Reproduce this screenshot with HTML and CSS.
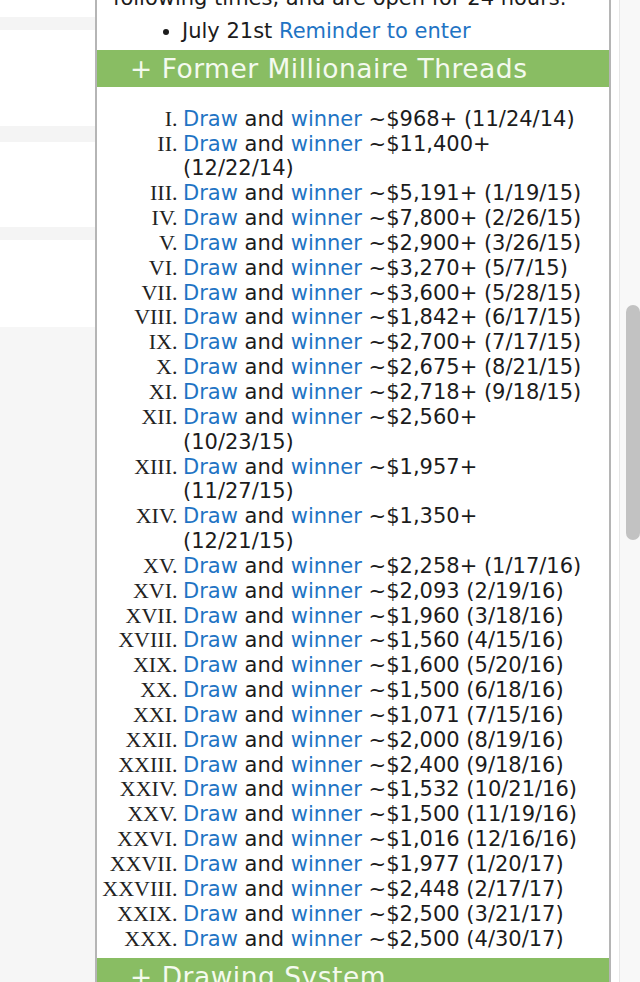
FILE: index.html
```html
<!DOCTYPE html>
<html>
	<head>
		<meta charset="utf-8" />
		<title>Former Millionaire Threads</title>
		<link rel="stylesheet" href="styles.css">
	</head>
	<body>
		<div id="page">
			<div id="side">
				<div class="band band1"></div>
				<div class="band band2"></div>
				<div class="band band3"></div>
				<div class="band band4"></div>
			</div>
			<div id="panel">
				<p class="intro">following times, and are open for 24 hours.</p>
				<ul class="dates">
					<li>July 21st <a href="#">Reminder to enter</a></li>
				</ul>
				<div class="head">+ Former Millionaire Threads</div>
				<ol class="threads">
					<li><a href="#">Draw</a> and <a href="#">winner</a> ~$968+ (11/24/14)</li>
					<li><a href="#">Draw</a> and <a href="#">winner</a> ~$11,400+ (12/22/14)</li>
					<li><a href="#">Draw</a> and <a href="#">winner</a> ~$5,191+ (1/19/15)</li>
					<li><a href="#">Draw</a> and <a href="#">winner</a> ~$7,800+ (2/26/15)</li>
					<li><a href="#">Draw</a> and <a href="#">winner</a> ~$2,900+ (3/26/15)</li>
					<li><a href="#">Draw</a> and <a href="#">winner</a> ~$3,270+ (5/7/15)</li>
					<li><a href="#">Draw</a> and <a href="#">winner</a> ~$3,600+ (5/28/15)</li>
					<li><a href="#">Draw</a> and <a href="#">winner</a> ~$1,842+ (6/17/15)</li>
					<li><a href="#">Draw</a> and <a href="#">winner</a> ~$2,700+ (7/17/15)</li>
					<li><a href="#">Draw</a> and <a href="#">winner</a> ~$2,675+ (8/21/15)</li>
					<li><a href="#">Draw</a> and <a href="#">winner</a> ~$2,718+ (9/18/15)</li>
					<li><a href="#">Draw</a> and <a href="#">winner</a> ~$2,560+ (10/23/15)</li>
					<li><a href="#">Draw</a> and <a href="#">winner</a> ~$1,957+ (11/27/15)</li>
					<li><a href="#">Draw</a> and <a href="#">winner</a> ~$1,350+ (12/21/15)</li>
					<li><a href="#">Draw</a> and <a href="#">winner</a> ~$2,258+ (1/17/16)</li>
					<li><a href="#">Draw</a> and <a href="#">winner</a> ~$2,093 (2/19/16)</li>
					<li><a href="#">Draw</a> and <a href="#">winner</a> ~$1,960 (3/18/16)</li>
					<li><a href="#">Draw</a> and <a href="#">winner</a> ~$1,560 (4/15/16)</li>
					<li><a href="#">Draw</a> and <a href="#">winner</a> ~$1,600 (5/20/16)</li>
					<li><a href="#">Draw</a> and <a href="#">winner</a> ~$1,500 (6/18/16)</li>
					<li><a href="#">Draw</a> and <a href="#">winner</a> ~$1,071 (7/15/16)</li>
					<li><a href="#">Draw</a> and <a href="#">winner</a> ~$2,000 (8/19/16)</li>
					<li><a href="#">Draw</a> and <a href="#">winner</a> ~$2,400 (9/18/16)</li>
					<li><a href="#">Draw</a> and <a href="#">winner</a> ~$1,532 (10/21/16)</li>
					<li><a href="#">Draw</a> and <a href="#">winner</a> ~$1,500 (11/19/16)</li>
					<li><a href="#">Draw</a> and <a href="#">winner</a> ~$1,016 (12/16/16)</li>
					<li><a href="#">Draw</a> and <a href="#">winner</a> ~$1,977 (1/20/17)</li>
					<li><a href="#">Draw</a> and <a href="#">winner</a> ~$2,448 (2/17/17)</li>
					<li><a href="#">Draw</a> and <a href="#">winner</a> ~$2,500 (3/21/17)</li>
					<li><a href="#">Draw</a> and <a href="#">winner</a> ~$2,500 (4/30/17)</li>
				</ol>
				<div class="head">+ Drawing System</div>
			</div>
			<div id="gutter">
				<div class="track">
					<div class="thumb"></div>
				</div>
			</div>
		</div>
	</body>
</html>
```
FILE: styles.css
```css
html, body{
	height: 100%;
	margin: 0;
	overflow: hidden;
}
body{
	background: #fff;
	color: #1c1c1c;
	font-family: "DejaVu Sans", Verdana, sans-serif;
	font-size: 21px;
	line-height: 24.85px;
}
a{
	color: #1f74c4;
	text-decoration: none;
}
#page{
	display: flex;
	height: 100%;
}
#side{
	width: 95px;
	display: flex;
	flex-direction: column;
}
#side .band{
	background: #f4f4f4;
}
#side .band1{
	margin-top: 17px;
	height: 13px;
}
#side .band2{
	margin-top: 96px;
	height: 16px;
}
#side .band3{
	margin-top: 85px;
	height: 13px;
}
#side .band4{
	margin-top: 87px;
	flex: 1;
	background: #f6f6f6;
}
#panel{
	width: 512px;
	flex-shrink: 0;
	border-left: 2px solid #b5b5b5;
	border-right: 2px solid #b5b5b5;
	margin-top: -14px;
}
#panel .intro{
	margin: 0 0 8px;
	padding-left: 16px;
}
#panel .dates{
	margin: 0 0 6.5px;
	padding-left: 85px;
}
#panel .head{
	background: #89bd63;
	color: #f4faef;
	font-size: 26.5px;
	letter-spacing: 0.5px;
	height: 37px;
	line-height: 37px;
	padding-left: 33px;
}
#panel .threads{
	list-style-type: upper-roman;
	margin: 19.5px 0 7px;
	padding: 0 24px 0 86px;
}
#panel .threads li::marker{
	font-family: "Liberation Serif", "Times New Roman", serif;
	font-size: 22px;
	color: #222;
}
#gutter{
	flex: 1;
	display: flex;
	padding-left: 8px;
}
#gutter .track{
	flex: 1;
	border-left: 1px solid #e6e6e6;
	background: #f8f8f8;
	padding-left: 6px;
}
#gutter .thumb{
	margin-top: 305px;
	height: 235px;
	background: #c2c2c2;
	border-radius: 7px;
}
```
